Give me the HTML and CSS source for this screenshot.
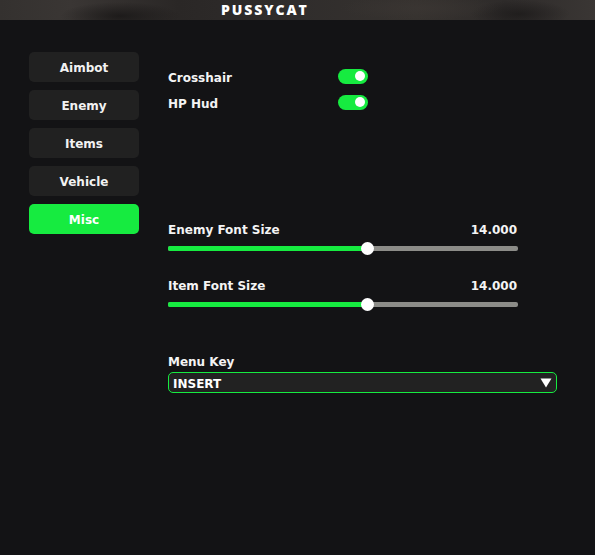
FILE: index.html
```html
<!DOCTYPE html>
<html>
<head>
<meta charset="utf-8">
<link rel="stylesheet" href="styles.css">
</head>
<body>
<header class="titlebar"><span class="title">PUSSYCAT</span></header>
<main class="main">
  <nav class="sidebar">
    <div class="tab">Aimbot</div>
    <div class="tab">Enemy</div>
    <div class="tab">Items</div>
    <div class="tab">Vehicle</div>
    <div class="tab active">Misc</div>
  </nav>
  <section class="content">
    <div class="check">
      <span class="label">Crosshair</span>
      <span class="toggle"><span class="knob"></span></span>
    </div>
    <div class="check">
      <span class="label">HP Hud</span>
      <span class="toggle"><span class="knob"></span></span>
    </div>

    <div class="slider first">
      <div class="slider-head"><span>Enemy Font Size</span><span>14.000</span></div>
      <div class="track-wrap">
        <div class="track"><div class="fill" style="width:57%"></div></div>
        <div class="thumb" style="left:57%"></div>
      </div>
    </div>
    <div class="slider second">
      <div class="slider-head"><span>Item Font Size</span><span>14.000</span></div>
      <div class="track-wrap">
        <div class="track"><div class="fill" style="width:57%"></div></div>
        <div class="thumb" style="left:57%"></div>
      </div>
    </div>

    <div class="combo-block">
      <div class="combo-label">Menu Key</div>
      <div class="combo">
        <span>INSERT</span>
        <svg class="arrow" width="12" height="10" viewBox="0 0 12 10"><polygon points="0.5,0.5 11.5,0.5 6,9.5" fill="#ffffff"/></svg>
      </div>
    </div>
  </section>
</main>
</body>
</html>
```

FILE: styles.css
```css
html, body {
  margin: 0;
  padding: 0;
  background: #131315;
  height: 100%;
}
body {
  font-family: "DejaVu Sans", Verdana, sans-serif;
  font-weight: bold;
  font-size: 12px;
  color: #f4f4f4;
  overflow: hidden;
}
.titlebar {
  height: 20px;
  display: flex;
  align-items: center;
  padding-left: 221px;
  background:
    radial-gradient(ellipse 60px 14px at 120px 16px, rgba(20,18,18,0.7), rgba(20,18,18,0) 100%),
    radial-gradient(ellipse 80px 12px at 420px 8px, rgba(60,55,52,0.6), rgba(60,55,52,0) 100%),
    radial-gradient(ellipse 50px 14px at 520px 14px, rgba(22,20,20,0.6), rgba(22,20,20,0) 100%),
    linear-gradient(90deg, #34312f 0%, #3a3634 12%, #2a2726 30%, #302d2c 50%, #36322f 70%, #2e2b2a 85%, #3a3634 100%);
}
.title {
  font-family: "Open Sans", "DejaVu Sans", sans-serif;
  font-weight: 800;
  font-size: 14px;
  letter-spacing: 1.9px;
  color: #ffffff;
  line-height: 14px;
}
.main {
  display: flex;
  padding: 32px 0 0 29px;
}
.sidebar {
  display: flex;
  flex-direction: column;
  gap: 8px;
  width: 110px;
}
.tab {
  height: 30px;
  box-sizing: border-box;
  padding-top: 2px;
  border-radius: 5px;
  background: #212121;
  display: flex;
  align-items: center;
  justify-content: center;
  color: #f2f2f2;
  line-height: 14px;
}
.tab.active {
  background: #16eb40;
  color: #ffffff;
}
.content {
  margin-left: 29px;
  padding-top: 16px;
  display: flex;
  flex-direction: column;
  width: 389px;
}
.check {
  display: flex;
  align-items: center;
  height: 16px;
  margin-bottom: 10px;
  width: 200px;
}
.check .label {
  width: 170px;
  line-height: 14px;
  padding-top: 3px;
}
.toggle {
  position: relative;
  width: 30px;
  height: 15px;
  border-radius: 8px;
  background: #16eb40;
}
.knob {
  position: absolute;
  right: 3px;
  top: 2.5px;
  width: 10px;
  height: 10px;
  border-radius: 50%;
  background: #ffffff;
}
.slider {
  width: 350px;
}
.slider.first { margin-top: 102px; }
.slider.second { margin-top: 23px; }
.slider-head {
  display: flex;
  justify-content: space-between;
  line-height: 14px;
  padding-top: 1px;
  margin-bottom: -1px;
  padding-right: 1px;
}
.track-wrap {
  position: relative;
  height: 13px;
  margin-top: 6px;
  display: flex;
  align-items: center;
}
.track {
  width: 100%;
  height: 5px;
  border-radius: 2px;
  background: #8c8c88;
  overflow: hidden;
}
.fill {
  height: 100%;
  background: #16eb40;
}
.thumb {
  position: absolute;
  top: 0;
  width: 13px;
  height: 13px;
  margin-left: -6.5px;
  border-radius: 50%;
  background: #ffffff;
}
.combo-block {
  margin-top: 44px;
}
.combo-label {
  line-height: 14px;
}
.combo {
  margin-top: 3px;
  height: 21px;
  box-sizing: border-box;
  border: 1px solid #16eb40;
  border-radius: 5px;
  background: #222222;
  display: flex;
  align-items: center;
  justify-content: space-between;
  padding: 2px 4px 0 4px;
  line-height: 14px;
  color: #ffffff;
}
.arrow {
  display: block;
  margin-top: -2px;
}
```
